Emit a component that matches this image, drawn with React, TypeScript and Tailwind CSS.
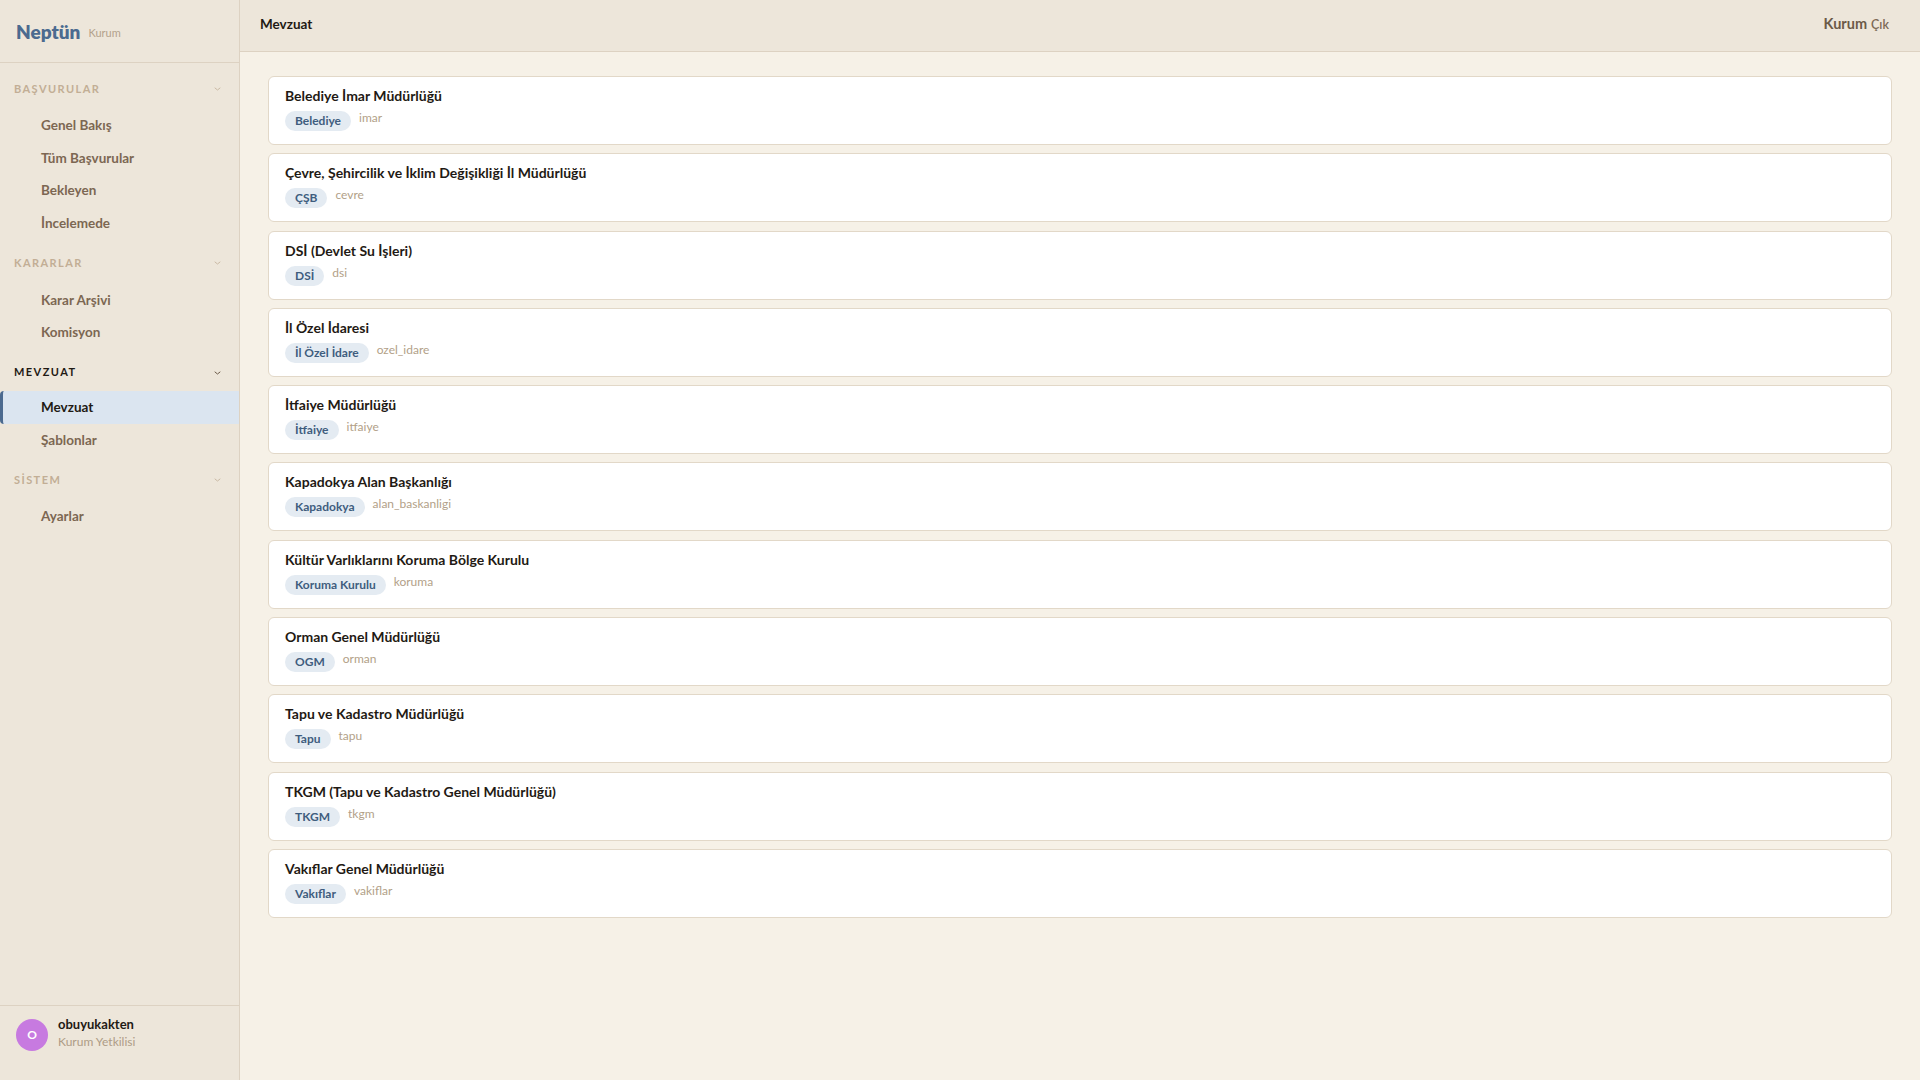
import React from "react";

const sections = [
  { title: "BAŞVURULAR", active: false, items: ["Genel Bakış", "Tüm Başvurular", "Bekleyen", "İncelemede"] },
  { title: "KARARLAR", active: false, items: ["Karar Arşivi", "Komisyon"] },
  { title: "MEVZUAT", active: true, items: ["Mevzuat", "Şablonlar"] },
  { title: "SİSTEM", active: false, items: ["Ayarlar"] },
];

const orgs = [
  { name: "Belediye İmar Müdürlüğü", tag: "Belediye", slug: "imar" },
  { name: "Çevre, Şehircilik ve İklim Değişikliği İl Müdürlüğü", tag: "ÇŞB", slug: "cevre" },
  { name: "DSİ (Devlet Su İşleri)", tag: "DSİ", slug: "dsi" },
  { name: "İl Özel İdaresi", tag: "İl Özel İdare", slug: "ozel_idare" },
  { name: "İtfaiye Müdürlüğü", tag: "İtfaiye", slug: "itfaiye" },
  { name: "Kapadokya Alan Başkanlığı", tag: "Kapadokya", slug: "alan_baskanligi" },
  { name: "Kültür Varlıklarını Koruma Bölge Kurulu", tag: "Koruma Kurulu", slug: "koruma" },
  { name: "Orman Genel Müdürlüğü", tag: "OGM", slug: "orman" },
  { name: "Tapu ve Kadastro Müdürlüğü", tag: "Tapu", slug: "tapu" },
  { name: "TKGM (Tapu ve Kadastro Genel Müdürlüğü)", tag: "TKGM", slug: "tkgm" },
  { name: "Vakıflar Genel Müdürlüğü", tag: "Vakıflar", slug: "vakiflar" },
];

function Chevron({ dark }: { dark: boolean }) {
  return (
    <svg width="7" height="4" viewBox="0 0 7 4" fill="none">
      <path d="M1 1l2.5 2L6 1" stroke={dark ? "#6b5a48" : "#c9b9a4"} strokeWidth="1" strokeLinecap="round" />
    </svg>
  );
}

export default function App() {
  return (
    <div
      className="flex h-[1080px] w-[1920px] overflow-hidden bg-[#f6f1e7] text-[#1f1a14]"
      style={{ fontFamily: "Lato, 'Open Sans', sans-serif" }}
    >
      <aside className="flex w-[240px] shrink-0 flex-col border-r border-[#ddd2c2] bg-[#ede6da]">
        <div className="flex h-[63px] items-center gap-[8px] border-b border-[#ddd2c2] pl-4 pt-[2px]">
          <span className="text-[19px] font-extrabold text-[#4b6a8f]">Neptün</span>
          <span className="mt-[3px] text-[11px] text-[#b3a28c]">Kurum</span>
        </div>
        <nav className="flex-1 pt-[15px]">
          {sections.map((s) => (
            <div key={s.title} className="mb-[13px]">
              <div className="flex h-[22px] items-center justify-between pl-[14px] pr-[18px]">
                <span
                  className={`text-[11px] font-bold tracking-[0.13em] ${s.active ? "text-[#1f1a14]" : "text-[#c2ae95]"}`}
                >
                  {s.title}
                </span>
                <Chevron dark={s.active} />
              </div>
              <div className={`${s.active ? "mt-[7px]" : "mt-[9px]"} flex flex-col`}>
                {s.items.map((it) => {
                  const act = it === "Mevzuat";
                  return act ? (
                    <div
                      key={it}
                      className="flex h-[33px] items-center rounded-l-[4px] border-l-[3px] border-[#4b6a8f] bg-[#dbe5f0] pl-[38px] text-[13.5px] font-bold text-[#1f1a14]"
                    >
                      {it}
                    </div>
                  ) : (
                    <div key={it} className="flex h-[32.6px] items-center pl-[41px] text-[13.5px] font-bold text-[#7c6752]">
                      {it}
                    </div>
                  );
                })}
              </div>
            </div>
          ))}
        </nav>
        <div className="flex h-[75px] items-start gap-[10px] border-t border-[#ddd2c2] pl-4 pt-[13px]">
          <div className="flex h-8 w-8 items-center justify-center rounded-full bg-[#c77ae0] text-[12px] font-bold text-white">
            O
          </div>
          <div className="-mt-[4px] flex flex-col leading-[18px]">
            <span className="text-[13px] font-bold text-[#1f1a14]">obuyukakten</span>
            <span className="text-[12px] text-[#ad9c86]">Kurum Yetkilisi</span>
          </div>
        </div>
      </aside>
      <main className="flex flex-1 flex-col">
        <header className="flex h-[52px] shrink-0 items-center justify-between border-b border-[#ddd2c2] bg-[#ede6da] pb-[3px] pl-5 pr-[31px]">
          <span className="text-[13.5px] font-bold text-[#1f1a14]">Mevzuat</span>
          <div className="flex items-baseline gap-[4px]">
            <span className="text-[14.5px] font-bold text-[#6b5a48]">Kurum</span>
            <span className="text-[12.5px] font-semibold text-[#7c6a56]">Çık</span>
          </div>
        </header>
        <div className="flex flex-col gap-[8.3px] px-[28px] pt-[24px]">
          {orgs.map((o) => (
            <div
              key={o.name}
              className="flex h-[69px] flex-col rounded-[6px] border border-[#e2d8c8] bg-white px-4 pt-[9px]"
            >
              <div className="text-[14px] font-bold leading-[20px] text-[#1f1a14]">{o.name}</div>
              <div className="mt-[5px] flex items-start gap-[8px]">
                <span className="flex h-[20px] items-center rounded-full bg-[#e4ebf2] px-[10px] text-[12px] font-bold text-[#3f5d7e]">
                  {o.tag}
                </span>
                <span className="text-[12px] leading-[14px] text-[#b29f88]">{o.slug}</span>
              </div>
            </div>
          ))}
        </div>
      </main>
    </div>
  );
}
